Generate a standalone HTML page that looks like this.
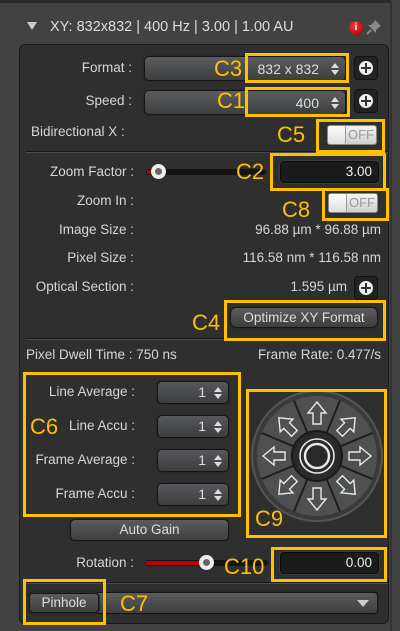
<!DOCTYPE html>
<html><head><meta charset="utf-8"><style>
*{margin:0;padding:0;box-sizing:border-box}
body{width:400px;height:631px;background:#424242;font-family:"Liberation Sans",sans-serif;position:relative;overflow:hidden;color:#d8d8d8}
.a{position:absolute}
.t{position:absolute;font-size:13.5px;color:#d6d6d6;white-space:nowrap;line-height:16px}
.r{text-align:right}
.dd{position:absolute;border-radius:5px;background:linear-gradient(#5a5c5e,#3c3e40);border:1px solid #161616;box-shadow:0 0 0 1px #2a2a2a}
.pl{position:absolute;width:24px;height:24px;border-radius:4px;background:#222;border:1px solid #111}
.pl:after{content:"";position:absolute;left:4px;top:4px;width:14px;height:14px;border-radius:50%;background:#eee}
.pl i{position:absolute;z-index:2;background:#333}
.tg{position:absolute;width:50px;height:20px;border-radius:3px;background:linear-gradient(#f4f4f4,#cfcfcf);border:1px solid #888}
.tg b{position:absolute;left:0;top:0;width:18px;height:18px;background:linear-gradient(#fff,#ddd);border-right:1px solid #999;border-radius:2px}
.tg span{position:absolute;left:20px;top:1px;font-size:13px;color:#999}
.tb{position:absolute;background:#1b1b1b;border:1px solid #0c0c0c;border-radius:4px;box-shadow:0 0 0 1px #3c3c3c;color:#eee;font-size:13.5px;text-align:right;padding-right:6px;line-height:20px}
.sep{position:absolute;height:2px;background:#1a1a1a;border-bottom:1px solid #4a4a4a}
.yb{position:absolute;border:3px solid #ffc000}
.yl{position:absolute;color:#ffc000;font-size:22px;line-height:24px}
.sp{position:absolute;width:72px;height:23px;border-radius:5px;background:linear-gradient(#55575a,#3c3e40);border:1px solid #141414;box-shadow:0 0 0 1px #2a2a2a;color:#ddd;font-size:14px;text-align:right;padding-right:22px;line-height:21px}
.ud{position:absolute;right:6px;top:5px;width:0;height:0;border-left:4px solid transparent;border-right:4px solid transparent;border-bottom:5px solid #ddd}
.ud2{position:absolute;right:6px;top:12px;width:0;height:0;border-left:4px solid transparent;border-right:4px solid transparent;border-top:5px solid #ddd}
</style></head><body>
<div class="a" style="left:0;top:0;width:392px;height:3px;background:#2a2a2a"></div>
<div class="a" style="left:390px;top:0;width:2px;height:631px;background:#333"></div>
<div class="a" style="left:27px;top:22px;width:0;height:0;border-left:5px solid transparent;border-right:5px solid transparent;border-top:8px solid #ccc"></div>
<div class="t" style="left:50px;top:19px;font-size:14.5px;color:#ddd">XY: 832x832 | 400 Hz | 3.00 | 1.00 AU</div>
<div class="a" style="left:349px;top:21px;width:14px;height:14px;border-radius:50%;background:radial-gradient(circle at 40% 35%,#f33,#900);color:#fff;font-size:10px;font-weight:bold;text-align:center;line-height:14px">i</div>
<svg class="a" style="left:366px;top:19px" width="16" height="16" viewBox="0 0 16 16"><path d="M9 1 L15 7 L13 8 L10 11 L10 14 L2 6 L5 6 L8 3 Z" fill="#8a8a8a"/><path d="M5 11 L1 15" stroke="#8a8a8a" stroke-width="2"/></svg>
<div class="a" style="left:19px;top:44px;width:370px;height:580px;background:#2f2f2f;border:1px solid #1a1a1a;border-radius:6px"></div>

<div class="t r" style="left:40px;top:60px;width:92px">Format :</div>
<div class="dd" style="left:144px;top:56px;width:202px;height:25px"><span class="a" style="right:26px;top:4px;font-size:14px;color:#ddd">832 x 832</span><i class="ud" style="top:6px"></i><i class="ud2" style="top:13px"></i></div>
<div class="pl" style="left:354px;top:56px"><i style="left:6px;top:10px;width:10px;height:2px"></i><i style="left:10px;top:6px;width:2px;height:10px"></i></div>
<div class="t r" style="left:40px;top:93px;width:92px">Speed :</div>
<div class="dd" style="left:144px;top:90px;width:202px;height:25px"><span class="a" style="right:26px;top:4px;font-size:14px;color:#ddd">400</span><i class="ud" style="top:6px"></i><i class="ud2" style="top:13px"></i></div>
<div class="pl" style="left:354px;top:89px"><i style="left:6px;top:10px;width:10px;height:2px"></i><i style="left:10px;top:6px;width:2px;height:10px"></i></div>
<div class="t" style="left:31px;top:124px">Bidirectional X :</div>
<div class="tg" style="left:327px;top:125px"><b></b><span>OFF</span></div>
<div class="sep" style="left:26px;top:151px;width:362px"></div>

<div class="t r" style="left:30px;top:164px;width:104px">Zoom Factor :</div>
<div class="a" style="left:146px;top:169px;width:120px;height:6px;border-radius:3px;background:#151515"></div>
<div class="a" style="left:147px;top:170px;width:8px;height:4px;background:#a00"></div>
<div class="a" style="left:151px;top:164px;width:15px;height:15px;border-radius:50%;background:radial-gradient(#666 30%,#eee 35%)"></div>
<div class="tb" style="left:280px;top:161px;width:99px;height:22px">3.00</div>
<div class="t r" style="left:30px;top:193px;width:104px">Zoom In :</div>
<div class="tg" style="left:328px;top:193px"><b></b><span>OFF</span></div>
<div class="t r" style="left:30px;top:222px;width:104px">Image Size :</div>
<div class="t r" style="left:200px;top:222px;width:181px">96.88 µm * 96.88 µm</div>
<div class="t r" style="left:30px;top:250px;width:104px">Pixel Size :</div>
<div class="t r" style="left:200px;top:250px;width:181px">116.58 nm * 116.58 nm</div>
<div class="t r" style="left:20px;top:279px;width:114px">Optical Section :</div>
<div class="t r" style="left:200px;top:279px;width:147px">1.595 µm</div>
<div class="pl" style="left:354px;top:276px"><i style="left:6px;top:10px;width:10px;height:2px"></i><i style="left:10px;top:6px;width:2px;height:10px"></i></div>
<div class="dd" style="left:230px;top:307px;width:148px;height:21px;border-radius:6px;text-align:center;font-size:13.5px;line-height:19px;color:#ddd">Optimize XY Format</div>
<div class="sep" style="left:26px;top:338px;width:362px"></div>
<div class="t" style="left:26px;top:347px">Pixel Dwell Time : 750 ns</div>
<div class="t r" style="left:200px;top:347px;width:181px">Frame Rate: 0.477/s</div>

<div class="t r" style="left:20px;top:384px;width:115px">Line Average :</div>
<div class="sp" style="left:157px;top:381px">1<i class="ud"></i><i class="ud2"></i></div>
<div class="t r" style="left:20px;top:418px;width:115px">Line Accu :</div>
<div class="sp" style="left:157px;top:415px">1<i class="ud"></i><i class="ud2"></i></div>
<div class="t r" style="left:20px;top:452px;width:115px">Frame Average :</div>
<div class="sp" style="left:157px;top:449px">1<i class="ud"></i><i class="ud2"></i></div>
<div class="t r" style="left:20px;top:486px;width:115px">Frame Accu :</div>
<div class="sp" style="left:157px;top:483px">1<i class="ud"></i><i class="ud2"></i></div>
<div class="dd" style="left:70px;top:519px;width:159px;height:22px;border-radius:5px;text-align:center;font-size:13.5px;line-height:20px;color:#ddd">Auto Gain</div>

<svg class="a" style="left:250px;top:389px" width="134" height="134" viewBox="-67 -67 134 134">
<circle r="65" fill="#3a3a3a" stroke="#555" stroke-width="2"/>
<circle r="60" fill="#4e5052"/>
<g stroke="#1e1e1e" stroke-width="2">
<line x1="9.6" y1="-23.1" x2="23" y2="-55.4"/><line x1="-9.6" y1="-23.1" x2="-23" y2="-55.4"/>
<line x1="9.6" y1="23.1" x2="23" y2="55.4"/><line x1="-9.6" y1="23.1" x2="-23" y2="55.4"/>
<line x1="23.1" y1="9.6" x2="55.4" y2="23"/><line x1="-23.1" y1="9.6" x2="-55.4" y2="23"/>
<line x1="23.1" y1="-9.6" x2="55.4" y2="-23"/><line x1="-23.1" y1="-9.6" x2="-55.4" y2="-23"/>
</g>
<circle r="25" fill="#2a2a2a" stroke="#1a1a1a" stroke-width="2"/>
<circle r="17" fill="none" stroke="#e8e8e8" stroke-width="1.6"/>
<circle r="12" fill="none" stroke="#e8e8e8" stroke-width="2.5"/>
<g fill="none" stroke="#e8e8e8" stroke-width="1.4" stroke-linejoin="miter">
<path id="ar" d="M0,-54 L-9,-43 L-4,-43 L-4,-32 L4,-32 L4,-43 L9,-43 Z"/>
<use href="#ar" transform="rotate(45)"/><use href="#ar" transform="rotate(90)"/><use href="#ar" transform="rotate(135)"/>
<use href="#ar" transform="rotate(180)"/><use href="#ar" transform="rotate(225)"/><use href="#ar" transform="rotate(270)"/><use href="#ar" transform="rotate(315)"/>
</g></svg>

<div class="t r" style="left:30px;top:555px;width:104px">Rotation :</div>
<div class="a" style="left:145px;top:560px;width:123px;height:6px;border-radius:3px;background:#151515"></div>
<div class="a" style="left:146px;top:561px;width:60px;height:4px;background:#b00"></div>
<div class="a" style="left:199px;top:555px;width:15px;height:15px;border-radius:50%;background:radial-gradient(#666 30%,#eee 35%)"></div>
<div class="tb" style="left:280px;top:552px;width:99px;height:22px">0.00</div>
<div class="sep" style="left:26px;top:582px;width:362px"></div>
<div class="dd" style="left:28px;top:592px;width:350px;height:22px;border-radius:4px"></div>
<div class="dd" style="left:29px;top:593px;width:70px;height:20px;border-radius:4px;text-align:center;font-size:13.5px;line-height:18px;color:#ddd">Pinhole</div>
<div class="a" style="left:357px;top:600px;width:0;height:0;border-left:6px solid transparent;border-right:6px solid transparent;border-top:7px solid #ccc"></div>

<div class="yb" style="left:245px;top:53px;width:104px;height:30px"></div><div class="yl" style="left:214px;top:57px">C3</div>
<div class="yb" style="left:245px;top:87px;width:105px;height:30px"></div><div class="yl" style="left:217px;top:89px">C1</div>
<div class="yb" style="left:316px;top:119px;width:69px;height:34px"></div><div class="yl" style="left:277px;top:123px">C5</div>
<div class="yb" style="left:270px;top:153px;width:116px;height:38px"></div><div class="yl" style="left:236px;top:160px">C2</div>
<div class="yb" style="left:322px;top:188px;width:67px;height:33px"></div><div class="yl" style="left:282px;top:198px">C8</div>
<div class="yb" style="left:224px;top:300px;width:162px;height:41px"></div><div class="yl" style="left:192px;top:311px">C4</div>
<div class="yb" style="left:23px;top:372px;width:218px;height:145px"></div><div class="yl" style="left:30px;top:415px">C6</div>
<div class="yb" style="left:246px;top:389px;width:141px;height:149px"></div><div class="yl" style="left:255px;top:507px">C9</div>
<div class="yb" style="left:271px;top:547px;width:116px;height:35px"></div><div class="yl" style="left:224px;top:555px">C10</div>
<div class="yb" style="left:23px;top:579px;width:83px;height:46px"></div><div class="yl" style="left:120px;top:592px">C7</div>
</body></html>
